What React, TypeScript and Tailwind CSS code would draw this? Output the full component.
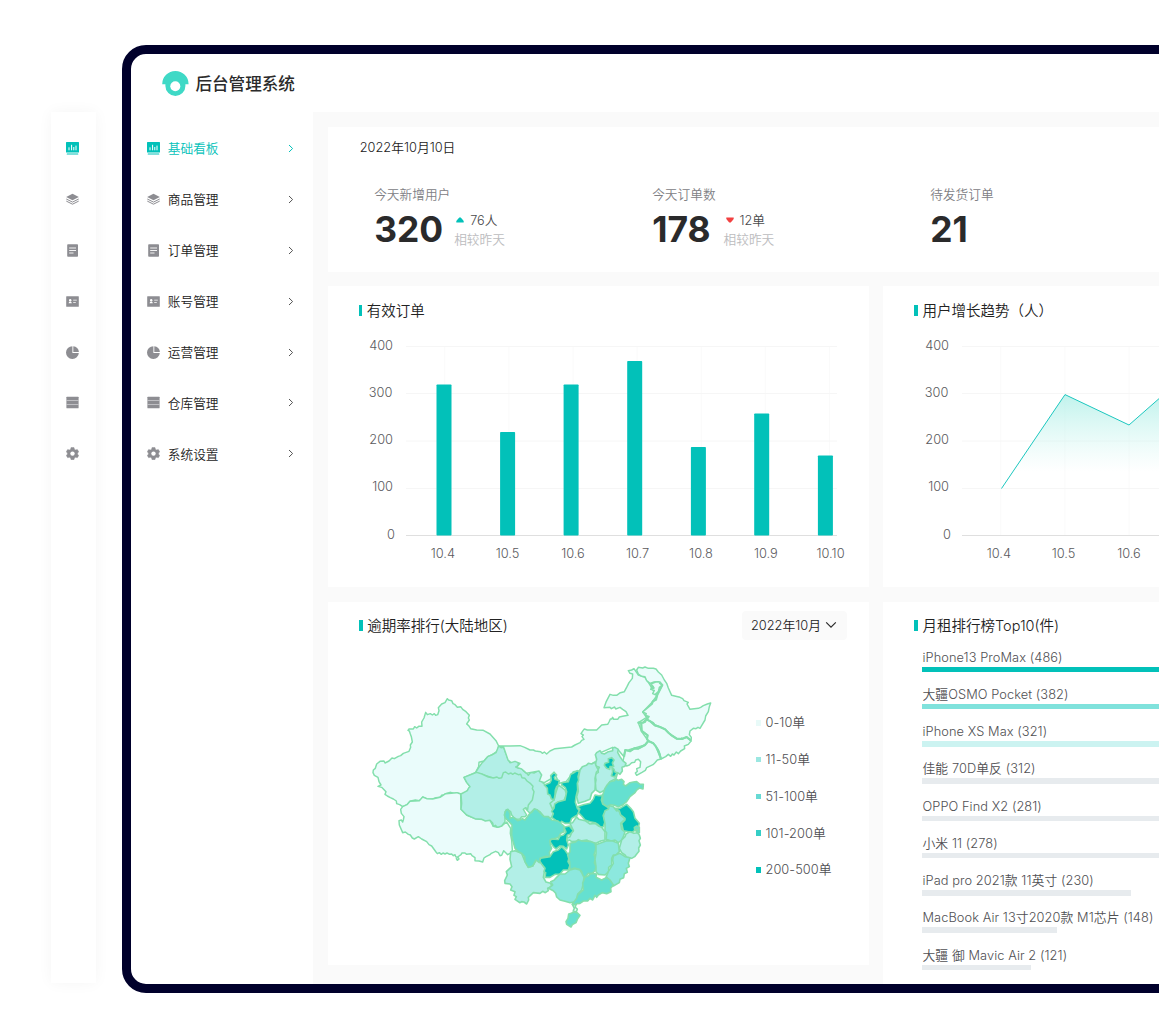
import React from "react";

type IconName = "board" | "layers" | "doc" | "card" | "pie" | "rows" | "gear";

const menu: { icon: IconName; label: string }[] = [
  { icon: "board", label: "基础看板" },
  { icon: "layers", label: "商品管理" },
  { icon: "doc", label: "订单管理" },
  { icon: "card", label: "账号管理" },
  { icon: "pie", label: "运营管理" },
  { icon: "rows", label: "仓库管理" },
  { icon: "gear", label: "系统设置" },
];

const shapes: Record<IconName, React.ReactNode> = {
  board: (
    <>
      <rect x="0" y="0" width="13" height="10.4" rx="0.5" fill="currentColor" />
      <path d="M3 8.3V5.3M5.6 8.3V2.8M7.8 8.3V5M10 8.3V3.6" stroke="#fff" strokeWidth="1" />
      <rect x="0.7" y="11.4" width="11.6" height="1.2" rx="0.5" fill="currentColor" />
    </>
  ),
  layers: (
    <>
      <path d="M6.5 .8 12.8 4 6.5 7.2 .2 4Z" fill="currentColor" />
      <path d="M.3 6 6.5 9.1 12.7 6M.3 8.1 6.5 11.2 12.7 8.1" fill="none" stroke="currentColor" strokeWidth="1" />
    </>
  ),
  doc: (
    <>
      <rect x="1.2" y="0.2" width="10.8" height="12.6" rx="0.8" fill="currentColor" />
      <path d="M3.2 4H10M3.2 6.5H10M3.2 9H7.5" stroke="#fff" strokeWidth="0.9" />
    </>
  ),
  card: (
    <>
      <rect x="0.2" y="1.2" width="12.6" height="10.6" rx="0.5" fill="currentColor" />
      <circle cx="4.2" cy="5.2" r="1.2" fill="#fff" />
      <path d="M2.6 8.2Q2.6 6.5 4.2 6.5T5.8 8.2ZM7.2 4.8H10.8V5.6H7.2ZM7.2 6.9H9.8V7.7H7.2Z" fill="#fff" />
    </>
  ),
  pie: (
    <>
      <path d="M6.4.2A6.4 6.4 0 1 0 12.8 6.9H6.4Z" fill="currentColor" />
      <path d="M7.3.2A6 6 0 0 1 12.9 5.9H7.3Z" fill="currentColor" />
    </>
  ),
  rows: (
    <>
      <rect x="0.4" y="0.7" width="12.2" height="11.6" rx="0.6" fill="currentColor" />
      <path d="M.4 4.5H12.6M.4 8.5H12.6" stroke="#d6d6d8" strokeWidth="0.7" />
    </>
  ),
  gear: (
    <>
      <path
        d="M5 .5H8L8.4 2.2 9.7 2.9 11.3 2.4 12.8 4.8 11.6 6V7.2L12.8 8.4 11.3 10.8 9.7 10.3 8.4 11 8 12.7H5L4.6 11 3.3 10.3 1.7 10.8.2 8.4 1.4 7.2V6L.2 4.8 1.7 2.4 3.3 2.9 4.6 2.2Z"
        fill="currentColor"
        stroke="currentColor"
        strokeWidth="0.4"
        strokeLinejoin="round"
      />
      <circle cx="6.5" cy="6.6" r="2.2" fill="#fff" />
    </>
  ),
};

function Icon({ name }: { name: IconName }) {
  return (
    <svg viewBox="0 0 13 13" className="h-[13px] w-[13px] shrink-0">
      {shapes[name]}
    </svg>
  );
}

function Title({ children }: { children: React.ReactNode }) {
  return (
    <div className="flex h-5 items-center gap-[4.5px] whitespace-nowrap text-[14.5px] font-[350] text-[#222]">
      <span className="h-[11px] w-[3.5px] bg-[#02c1b9]" />
      <span className="pt-[1.6px]">{children}</span>
    </div>
  );
}

function Stat(p: { label: string; value: string; delta?: string; down?: boolean }) {
  return (
    <div className="w-[278px] shrink-0">
      <div className="h-5 text-[12.7px] font-[350] leading-[19px] text-[#808084]">{p.label}</div>
      <div className={`flex h-[46px] items-center pt-[5px] ${p.down ? "gap-[13px]" : "gap-[11px]"}`}>
        <span className="text-[35.4px] font-bold leading-9 text-[#2a2a2b]">{p.value}</span>
        {p.delta && (
          <div className="text-[12.7px] font-[350] leading-[19.5px]">
            <div className="flex items-center gap-1.5 pl-0.5 text-[#4a4a4c]">
              <svg viewBox="0 0 8 6" className="h-1.5 w-2">
                {p.down ? (
                  <path d="M.3.6H7.7V2L4.8 5.4H3.2L.3 2Z" fill="#f24141" />
                ) : (
                  <path d="M.3 5.4H7.7V4L4.8.6H3.2L.3 4Z" fill="#02c1b9" />
                )}
              </svg>
              <span>{p.delta}</span>
            </div>
            <div className="text-[#bcbcbe]">相较昨天</div>
          </div>
        )}
      </div>
    </div>
  );
}

const days = ["10.4", "10.5", "10.6", "10.7", "10.8", "10.9", "10.10"];
const labelX = [102.8, 167.5, 233, 297.5, 361, 425.8, 490.5];
const bars = [
  [96.5, 384.5],
  [160.1, 432],
  [223.6, 384.5],
  [287.2, 361],
  [350.9, 447],
  [414.2, 413.5],
  [477.9, 455.5],
];
const axis: [string, number, number][] = [
  ["400", 53, 344.8],
  ["300", 52.3, 392.2],
  ["200", 53, 439.4],
  ["100", 53, 486.6],
  ["0", 54.8, 533.8],
];

function Axes({ labels }: { labels: string[] }) {
  return (
    <>
      {[0, 1, 2, 3, 4, 5, 6].map((i) => (
        <path key={i} d={`M${104.8 + i * 64.1} 61V250`} stroke="#fafafa" />
      ))}
      {[60.5, 107.5, 155, 202.5].map((y) => (
        <path key={y} d={`M66 ${y}H497`} stroke="#f6f6f6" />
      ))}
      <path d="M66 249.5H497" stroke="#dfdfdf" />
      <g fill="#5a5a5d" fontSize="12.8" fontWeight="350">
        {axis.map(([t, x, y]) => (
          <text key={t} x={x} y={y - 281.2} textAnchor="end">{t}</text>
        ))}
        {labels.map((d, i) => (
          <text key={d} x={labelX[i]} y="272.3" textAnchor="middle">{d}</text>
        ))}
      </g>
    </>
  );
}

function BarChart() {
  return (
    <svg viewBox="0 0 520 290" className="h-[290px] w-[520px]">
      <Axes labels={days} />
      {bars.map(([x, top]) => (
        <rect key={x} x={x} y={top - 286} width="15" height={535.5 - top} rx="0.8" fill="#02c1b9" />
      ))}
    </svg>
  );
}

function AreaChart() {
  return (
    <svg viewBox="0 0 520 290" className="h-[290px] w-[520px]">
      <defs>
        <linearGradient id="area" gradientUnits="userSpaceOnUse" x1="0" y1="85" x2="0" y2="186">
          <stop offset="0" stopColor="#a5ede4" />
          <stop offset="1" stopColor="#c8f5ef" stopOpacity="0" />
        </linearGradient>
      </defs>
      <Axes labels={days.slice(0, 3)} />
      <path d="M105.5 202.5 169 108.6 233 139 299 81V203Z" fill="url(#area)" />
      <path d="M105.5 202.5 169 108.6 233 139 299 81" fill="none" stroke="#1cc7bf" />
    </svg>
  );
}

const light = "#eafcfb";
const soft = "#b2efe7";
const mid = "#8ce8de";
const strong = "#65e0d0";
const full = "#02c1b9";

const west: [string, string][] = [
  [light, "M262 26 266 30 275 32 279 41 284 43 292 52 302 50 308 58 318 65 328 76 325 84 328 90 320 102 326 107 332 116 350 120 370 121 390 132 408 152 416 168 412 183 395 195 383 200 372 213 357 217 356 230 347 247 312 262 320 277 330 290 322 302 318 310 302 312 290 308 285 311 270 307 257 311 250 317 246 315 240 322 228 323 218 327 200 326 188 321 184 328 178 332 166 330 150 334 141 344 128 350 119 344 110 341 109 333 100 327 91 323 82 318 75 313 78 305 65 292 54 289 63 285 57 275 54 262 43 256 39 248 40 240 46 235 50 222 60 214 72 213 75 219 87 213 96 204 103 206 115 199 122 197 130 190 147 184 152 172 151 165 157 156 154 140 151 132 148 123 144 121 147 117 160 117 164 110 170 114 176 109 186 109 185 96 192 84 197 67 202 74 211 71 217 75 223 71 227 76 233 74 237 62 235 53 245 42 255 38Z"],
  [light, "M302 312 290 308 257 311 240 322 218 327 200 326 188 321 178 332 150 334 141 344 128 350 122 358 124 370 132 380 130 390 128 396 124 390 117 392 118 405 128 428 136 426 145 433 151 435 157 444 163 447 175 440 185 447 200 455 207 464 215 468 228 486 232 491 238 488 244 493 249 489 255 492 261 489 269 493 275 492 280 497 285 494 287 500 294 501 297 507 292 511 289 506 293 501 303 494 306 489 315 489 320 493 332 491 336 497 345 503 345 512 357 513 368 516 372 504 378 500 390 494 394 490 407 484 415 488 420 497 425 496 431 482 438 489 443 494 454 488 457 480 455 450 451 430 452 415 440 396 425 408 412 412 400 409 390 391 345 386 320 375 303 358Z"],
  [soft, "M416 168 423 173 431 172 436 186 440 195 444 208 450 218 462 210 465 213 472 207 479 214 474 222 477 226 467 231 477 235 485 235 490 242 500 250 505 256 512 247 522 249 536 241 545 247 545 258 541 269 549 279 560 288 572 305 595 340 585 365 575 382 565 390 550 378 540 365 523 357 510 370 498 358 500 330 450 280 347 247 355 234 365 220 372 213 383 200 395 195 408 188Z"],
  [soft, "M312 262 350 247 366 252 385 261 400 264 411 261 417 265 425 263 430 248 437 246 445 252 453 249 458 253 464 249 475 254 482 253 486 263 495 265 501 273 512 281 519 289 517 296 522 305 517 330 505 345 503 358 497 353 490 358 500 375 495 380 485 380 480 387 470 388 461 382 455 375 452 365 445 360 435 365 435 395 425 408 412 412 406 406 400 409 398 399 390 391 376 393 366 388 345 386 320 375 303 358 305 340 303 312 322 302 326 294 330 290 320 277Z"],
];

const north: [string, string][] = [
  [light, "M-94 258-60 258-30 257-16 262 0 270 10 270 16 273 32 275 37 280 43 276 50 282 60 273 75 266 125 261 135 255 150 248 155 241 162 238 156 230 160 225 153 221 159 212 163 207 172 210 200 210 210 200 215 195 233 193 237 186 241 177 245 177 248 172 251 178 263 178 268 171 278 169 294 166 288 155 278 148 270 142 257 147 254 141 244 146 240 142 222 143 229 124 240 103 250 106 260 106 271 98 283 95 291 80 297 68 307 55 308 42 300 40 295 32 305 30 312 26 325 45 345 52 357 70 380 108 365 128 338 156 350 172 325 188 335 215 355 243 345 255 300 268 285 280 282 290 265 270 248 262 200 283 200 305 165 320 148 332 130 335 120 350 108 365 88 370 72 337 65 355 43 368 28 363 35 345 27 333 -10 340-25 327-40 322-30 310-45 304-57 308-66 300-79 262Z"],
  [light, "M320 30 325 22 338 24 345 21 355 25 370 25 378 27 385 36 395 45 403 60 410 70 415 84 425 106 437 109 450 112 458 116 462 122 475 127 471 132 475 139 480 148 505 145 512 142 520 137 532 132 542 129 538 140 535 155 527 168 525 180 510 205 504 202 498 206 490 205 480 213 478 224 484 232 483 243 477 236 470 238 470 230 461 238 455 234 448 240 440 235 425 225 416 219 405 208 390 201 375 195 370 188 350 178 356 170 346 167 349 161 338 156 350 146 365 133 368 124 378 119 380 108 397 75 385 65 372 66 360 70 350 62 345 50 335 49 325 42Z"],
  [light, "M350 178 362 185 375 197 388 200 405 208 425 227 440 237 455 238 470 232 483 243 475 253 463 258 464 266 452 273 445 281 439 276 432 285 427 282 422 289 415 283 407 290 393 297 390 283 385 270 378 260 370 250 355 243 350 237 353 226 335 212 333 190 345 187Z"],
  [light, "M355 243 370 250 378 260 385 278 393 297 382 300 375 308 369 314 350 323 346 331 336 337 320 346 316 339 322 334 320 326 330 322 332 305 325 298 317 300 314 307 305 308 298 315 290 318 278 307 282 290 285 270 300 275 314 265 325 266 345 255Z"],
  [light, "M362 72 377 66 390 66 397 75 388 82 385 95 375 104 368 101 373 91 362 88 370 80Z"],
];

const borders =
  "M350 178 362 185 375 196 390 201 405 208 416 219 425 226 440 236 455 237 470 231 483 241M355 243 370 250 378 260 386 275 393 297M282 290 286 270 300 272 314 265 325 266 345 255 355 243 351 236 353 226 335 213 334 190 325 188 340 187 350 178 356 170 346 167M365 133 369 124 378 119 382 104 397 75 388 68M362 86 371 84 364 76";

const centre: [string, string][] = [
  [soft, "M320 38 330 32 335 40 343 42 355 35 368 32 368 24 375 22 385 28 383 37 390 50 398 62 408 70 405 79 396 82 397 93 390 103 383 98 378 115 360 125 345 150 330 158 318 150 316 130 318 120 315 103 325 97 324 89 328 82 315 77 320 58 316 44Z"],
  [full, "M355 56 365 53 372 60 367 69 371 79 360 80 359 88 350 85 343 76 345 70 356 67Z"],
  [full, "M366 83 372 88 374 95 381 98 374 111 364 107 368 96Z"],
  [soft, "M270 90 277 80 289 76 295 70 305 72 315 66 318 77 325 90 319 97 315 115 316 132 315 150 305 160 300 178 285 184 265 190 260 170 265 154 262 130Z"],
  [soft, "M205 135 215 142 225 150 230 162 222 182 205 186 188 208 180 190 192 180 197 160Z"],
  [full, "M262 92 268 95 264 110 266 120 262 130 263 150 258 170 256 187 262 205 268 212 262 225 245 235 240 250 225 250 215 244 210 250 185 232 190 221 185 214 192 205 194 192 205 185 225 180 230 155 226 143 215 135 215 128 235 125 242 103 252 98Z"],
  [full, "M192 97 200 105 193 112 195 118 208 122 205 135 200 140 196 150 195 165 192 180 184 176 180 165 173 162 172 145 163 135 180 128 184 120 182 107Z"],
  [strong, "M338 165 345 145 352 134 360 125 373 122 378 117 385 121 395 118 402 125 400 133 407 138 420 128 430 126 440 125 450 133 460 133 459 147 448 144 440 150 435 158 420 170 410 185 396 196 385 200 373 196 362 194 350 200 338 190Z"],
  [full, "M262 200 280 194 300 190 310 178 315 165 327 167 338 165 334 180 338 192 350 200 360 208 347 215 340 225 345 245 340 260 332 262 325 254 315 248 300 245 285 240 275 228 265 218 270 207Z"],
  [mid, "M345 212 355 208 358 197 370 200 380 213 386 210 392 225 405 237 392 250 395 268 405 275 400 290 395 300 385 308 375 300 364 303 348 298 350 278 345 272 345 250 340 228Z"],
  [full, "M375 205 390 205 410 193 422 205 430 215 435 235 448 250 445 263 445 278 435 271 425 277 400 272 395 250 405 240 405 235 392 225 388 213Z"],
  [strong, "M433 262 440 258 448 262 448 278 440 280 442 268 434 270Z"],
  [soft, "M240 250 248 248 260 230 266 238 285 242 300 252 315 250 327 259 335 262 345 275 345 300 332 303 318 310 300 306 290 300 270 303 245 305 239 300 232 303 229 295 240 290 244 280 250 272Z"],
  [soft, "M395 300 405 290 408 282 420 275 432 280 442 278 448 285 451 295 447 302 451 315 446 324 447 334 442 340 434 350 425 355 410 352 405 345 395 338 388 325Z"],
  [soft, "M62 335 75 332 95 340 105 365 115 382 128 378 138 360 150 363 165 385 160 412 168 426 182 430 186 440 173 445 175 452 166 458 158 454 150 460 130 458 115 472 116 480 110 492 102 486 95 485 89 488 75 478 79 470 72 466 75 455 62 450 66 440 60 432 45 430 44 422 52 405 49 395 56 388 65 380 60 358Z"],
  [strong, "M48 210 54 208 60 220 60 235 70 232 83 242 90 240 97 236 105 240 120 220 126 216 133 207 142 209 150 218 162 230 175 230 185 240 204 243 222 258 222 275 212 280 205 292 180 300 181 315 185 325 178 337 180 350 168 349 150 355 148 368 138 360 128 378 115 382 105 365 104 350 95 340 85 335 75 325 68 300 65 285 66 255 58 246 47 235 43 225Z"],
  [full, "M222 262 238 258 250 272 240 283 232 286 230 300 235 315 230 327 220 319 210 318 198 327 190 320 180 305 184 297 205 298 210 288 220 285 228 276Z"],
  [full, "M180 350 190 335 205 330 215 320 225 330 238 350 234 365 240 375 235 390 220 390 210 402 195 403 180 412 165 412 167 398 162 395 165 385 155 372 149 363 152 355Z"],
  [strong, "M240 310 255 307 265 299 275 303 300 304 315 310 318 325 312 345 317 355 313 368 318 380 315 392 305 402 295 400 285 412 275 406 275 395 268 388 253 384 240 389 239 365 233 345 240 335Z"],
  [mid, "M318 314 330 310 350 302 368 303 385 310 388 335 377 346 370 345 365 355 365 375 356 382 356 395 345 405 325 403 318 395 318 380 315 358 318 340Z"],
  [mid, "M382 343 390 340 405 350 420 353 415 370 418 380 409 385 412 397 403 401 401 413 390 418 388 428 370 438 360 422 348 412 355 395 361 385 370 370 368 360 370 348Z"],
  [mid, "M182 425 192 421 200 412 210 402 225 402 240 390 255 386 270 390 276 400 282 412 280 430 275 450 263 462 262 475 255 485 240 488 225 484 210 480 200 471 197 460 190 452 175 445 188 435Z"],
  [strong, "M285 412 296 407 302 400 320 402 318 412 335 420 350 412 360 420 370 435 362 445 363 455 350 461 337 458 325 465 320 472 315 466 308 480 300 475 293 483 280 483 270 490 260 491 255 498 247 493 260 475 263 465 280 450 278 430Z"],
  [light, "M247 493 257 494 256 502 262 507 259 516 250 512 253 505Z"],
  [strong, "M236 522 244 520 250 516 261 518 270 526 262 538 258 548 247 554 243 561 230 553 228 545 234 535Z"],
];

function Regions({ list, at, width }: { list: [string, string][]; at: string; width: number }) {
  return (
    <g transform={at} strokeWidth={width}>
      {list.map(([fill, d], i) => (
        <path key={i} d={d} fill={fill} />
      ))}
    </g>
  );
}

function ChinaMap() {
  return (
    <svg
      viewBox="0 0 1080 810"
      className="h-[270px] w-[360px] shrink-0"
      stroke="#83dfac"
      strokeLinejoin="round"
    >
      <Regions list={west} at="translate(0 90)" width={4.4} />
      <Regions list={north} at="translate(510 0)" width={4.4} />
      <path d={borders} transform="translate(510 0)" fill="none" strokeWidth="6.5" />
      <Regions list={centre} at="translate(390 240)" width={4.8} />
    </svg>
  );
}

const legend = [
  ["bg-[#e8faf8]", "0-10单"],
  ["bg-[#9be7e1]", "11-50单"],
  ["bg-[#67dad4]", "51-100单"],
  ["bg-[#35cec6]", "101-200单"],
  ["bg-[#02c1b9]", "200-500单"],
];

const ranks: [string, string][] = [
  ["iPhone13 ProMax (486)", "w-[440px] bg-[#02c1b9]"],
  ["大疆OSMO Pocket (382)", "w-[346px] bg-[#80e2dc]"],
  ["iPhone XS Max (321)", "w-[291px] bg-[#ccf3f1]"],
  ["佳能 70D单反 (312)", "w-[283px] bg-[#e7ebee]"],
  ["OPPO Find X2 (281)", "w-[255px] bg-[#e7ebee]"],
  ["小米 11 (278)", "w-[252px] bg-[#e7ebee]"],
  ["iPad pro 2021款 11英寸 (230)", "w-[209px] bg-[#e7ebee]"],
  ["MacBook Air 13寸2020款 M1芯片 (148)", "w-[134.5px] bg-[#e7ebee]"],
  ["大疆 御 Mavic Air 2 (121)", "w-[109px] bg-[#e7ebee]"],
];

export default function App() {
  return (
    <div className="flex h-[1028px] w-full overflow-hidden bg-white font-['Inter','Noto_Sans_CJK_SC',sans-serif]">
      <aside className="ml-[51px] mt-28 h-[871px] w-[45px] shrink-0 bg-white pr-[1.6px] pt-[11px] shadow-[0_0_14px_rgba(0,0,0,0.045)]">
        {menu.map((m, i) => (
          <div key={m.icon} className={`flex h-[50.9px] items-center justify-center ${i ? "text-[#8d8d92]" : "text-[#02c1b9]"}`}>
            <Icon name={m.icon} />
          </div>
        ))}
      </aside>
      <div className="ml-[26.4px] mt-[45px] h-[948px] w-[1400px] shrink-0 overflow-hidden rounded-[24px] border-[9px] border-[#00002b] bg-white">
        <header className="flex h-[58px] items-center gap-[6.6px] pl-[30.4px] pt-px">
          <svg viewBox="0 0 27 26" className="h-[26px] w-[27px]">
            <path d="M.2 13.2A13 13 0 0 1 26.6 13.2H23.4V15A10 10 0 0 1 3.4 15V13.2Z" fill="#3fd9c6" />
            <circle cx="13.3" cy="15.3" r="5" fill="#fff" />
          </svg>
          <h1 className="pt-[1.5px] text-[16.6px] font-medium text-[#2b2b2b]">后台管理系统</h1>
        </header>
        <div className="flex h-[872px]">
          <nav className="w-[182px] shrink-0 pt-[11.1px]">
            {menu.map((m, i) => (
              <div key={m.icon} className={`flex h-[50.9px] items-center pl-[15.4px] pr-[19px] ${i ? "text-[#8d8d92]" : "text-[#02c1b9]"}`}>
                <Icon name={m.icon} />
                <span className={`ml-2 flex-1 pt-[0.6px] text-[12.7px] font-[350] ${i ? "text-[#222]" : ""}`}>{m.label}</span>
                <svg viewBox="0 0 6 9" className={`h-[9px] w-1.5 ${i ? "text-[#555]" : ""}`}>
                  <path d="M1 1 4.6 4.5 1 8" fill="none" stroke="currentColor" strokeWidth="1" />
                </svg>
              </div>
            ))}
          </nav>
          <main className="flex flex-1 flex-col gap-[14.5px] bg-[#fafafa] pl-[14.6px] pt-[14.5px]">
            <section className="h-[145px] shrink-0 bg-white pl-[31.7px] pt-[11px]">
              <div className="h-5 text-[12.8px] font-[350] leading-5 text-[#222]">2022年10月10日</div>
              <div className="flex pl-[14.5px] pt-[27px]">
                <Stat label="今天新增用户" value="320" delta="76人" />
                <Stat label="今天订单数" value="178" delta="12单" down />
                <Stat label="待发货订单" value="21" />
              </div>
            </section>
            <div className="flex h-[301px] shrink-0 gap-[14.5px]">
              <section className="w-[541px] shrink-0 bg-white pl-[30.7px] pt-3.5">
                <Title>有效订单</Title>
                <div className="-ml-[18.7px] -mt-[34px]">
                  <BarChart />
                </div>
              </section>
              <section className="flex-1 bg-white pl-[31px] pt-3.5">
                <Title>用户增长趋势（人）</Title>
                <div className="-ml-[18px] -mt-[34px]">
                  <AreaChart />
                </div>
              </section>
            </div>
            <div className="flex h-[383px] shrink-0 gap-[14.5px]">
              <section className="h-[363.5px] w-[541px] shrink-0 bg-white pl-[31.2px] pt-[9px]">
                <div className="flex h-[29px] items-center justify-between pr-[22px]">
                  <div className="pt-px">
                    <Title>逾期率排行(大陆地区)</Title>
                  </div>
                  <div className="flex h-[29px] w-[105px] items-center gap-1 rounded-sm bg-[#fafafa] pl-[9px] text-[12.8px] font-[350] text-[#222]">
                    <span className="pt-px">2022年10月</span>
                    <svg viewBox="0 0 12 8" className="h-2 w-3">
                      <path d="M1.2 1.4 6 6.2 10.8 1.4" fill="none" stroke="#2b2b2b" strokeWidth="1.2" />
                    </svg>
                  </div>
                </div>
                <div className="flex pl-[0.8px] pt-5">
                  <ChinaMap />
                  <div className="ml-[36px] mt-[44.9px]">
                    {legend.map(([c, t]) => (
                      <div key={t} className="flex h-[36.8px] items-center gap-1 whitespace-nowrap text-[12.8px] font-[350] tracking-[0.06px] text-[#505053]">
                        <span className={`h-[5.5px] w-[5.5px] ${c}`} />
                        {t}
                      </div>
                    ))}
                  </div>
                </div>
              </section>
              <section className="flex-1 bg-white pl-[31px] pt-3.5">
                <Title>月租排行榜Top10(件)</Title>
                <div className="pl-2 pt-3">
                  {ranks.map(([t, c]) => (
                    <div key={t} className="h-[37.25px]">
                      <div className="h-[19px] whitespace-nowrap text-[12.8px] font-[350] leading-[19px] tracking-[0.08px] text-[#505053]">{t}</div>
                      <div className={`h-[5.5px] ${c}`} />
                    </div>
                  ))}
                </div>
              </section>
            </div>
          </main>
        </div>
      </div>
    </div>
  );
}
